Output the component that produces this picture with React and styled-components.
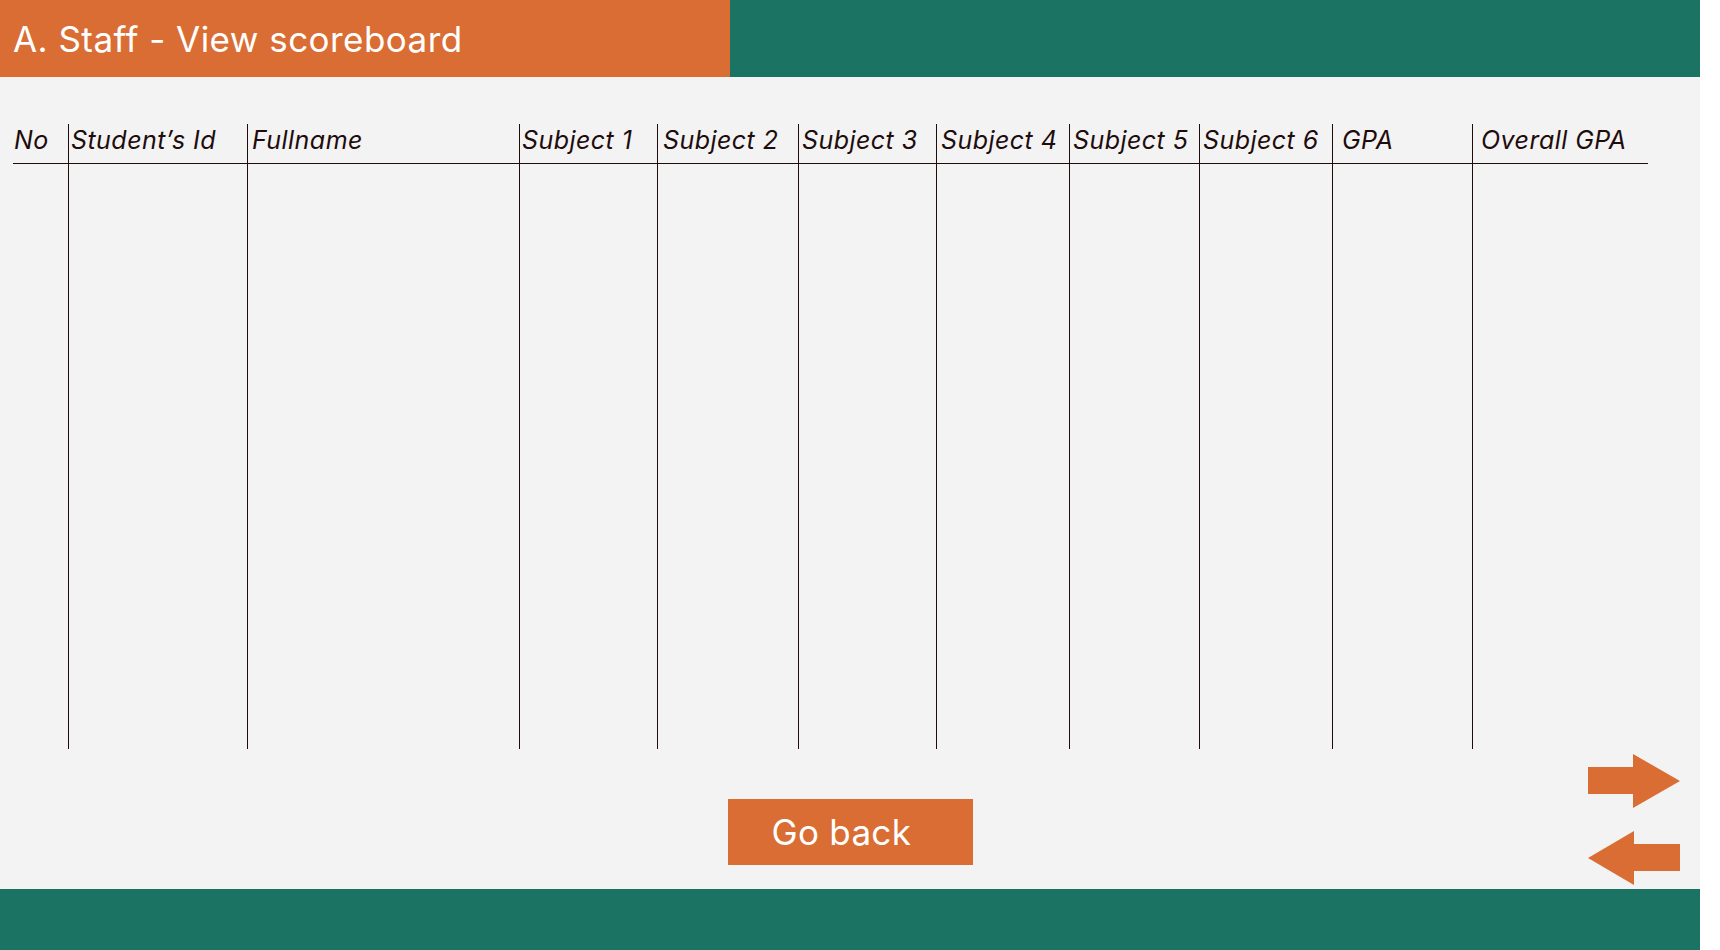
import React from "react";
import styled, { createGlobalStyle } from "styled-components";

const GlobalStyle = createGlobalStyle`
  html, body {
    margin: 0;
    padding: 0;
    background: #ffffff;
  }
  body {
    font-family: Inter, "Noto Sans", sans-serif;
  }
`;

const ORANGE = "#DA6D33";
const GREEN = "#1B7363";
const INK = "#200c0c";

const Page = styled.div`
  width: 1700px;
  height: 950px;
  background: #f3f3f3;
  display: flex;
  flex-direction: column;
`;

const TopBar = styled.header`
  height: 77px;
  display: flex;
  flex-shrink: 0;
`;

const TitleBlock = styled.div`
  width: 730px;
  background: ${ORANGE};
  display: flex;
  align-items: center;
  padding-left: 13px;
  box-sizing: border-box;
`;

const Title = styled.h1`
  margin: 0;
  font-family: Inter, sans-serif;
  font-weight: 400;
  font-size: 35px;
  color: #ffffff;
  line-height: 42px;
  letter-spacing: 0.45px;
`;

const TopFill = styled.div`
  flex: 1;
  background: ${GREEN};
`;

const Main = styled.main`
  flex: 1;
  display: flex;
  flex-direction: column;
  padding-top: 47px;
`;

const Table = styled.div`
  margin-left: 13px;
  height: 625px;
  display: grid;
  grid-template-columns: ${(p) => p.$cols};
`;

const Column = styled.div`
  display: flex;
  flex-direction: column;
  border-left: ${(p) => (p.$first ? "none" : `1px solid ${INK}`)};
`;

const HeadCell = styled.div`
  height: 40px;
  box-sizing: border-box;
  border-bottom: 1.5px solid ${INK};
  padding-left: ${(p) => p.$indent}px;
  padding-top: 1px;
  font-family: Inter, sans-serif;
  font-style: italic;
  font-size: 25px;
  line-height: 30px;
  letter-spacing: 0.45px;
  color: ${INK};
  white-space: nowrap;
`;

const BodyCell = styled.div`
  flex: 1;
`;

const Bottom = styled.div`
  flex: 1;
  display: grid;
  grid-template-columns: 1fr auto 1fr;
`;

const ButtonSlot = styled.div`
  grid-column: 2;
  padding-top: 50px;
`;

const GoBack = styled.button`
  width: 245px;
  height: 66px;
  border: none;
  background: ${ORANGE};
  color: #ffffff;
  font-family: Inter, sans-serif;
  font-size: 35px;
  line-height: 42px;
  letter-spacing: 0.3px;
  display: flex;
  align-items: center;
  padding: 0 0 0 44px;
  cursor: pointer;
`;

const Pager = styled.div`
  grid-column: 3;
  justify-self: end;
  display: flex;
  flex-direction: column;
  gap: 23px;
  padding-top: 5px;
  margin-right: 20px;
`;

const ArrowButton = styled.button`
  border: none;
  background: none;
  padding: 0;
  width: 92px;
  height: 54px;
  display: block;
  cursor: pointer;
  svg {
    display: block;
  }
`;

const Footer = styled.footer`
  height: 61px;
  background: ${GREEN};
  flex-shrink: 0;
`;

const columns = [
  { label: "No", width: 55, indent: 1 },
  { label: "Student’s Id", width: 179, indent: 2 },
  { label: "Fullname", width: 272, indent: 4 },
  { label: "Subject 1", width: 138, indent: 2 },
  { label: "Subject 2", width: 141, indent: 5 },
  { label: "Subject 3", width: 138, indent: 3 },
  { label: "Subject 4", width: 133, indent: 4 },
  { label: "Subject 5", width: 130, indent: 3 },
  { label: "Subject 6", width: 133, indent: 3 },
  { label: "GPA", width: 140, indent: 9 },
  { label: "Overall GPA", width: 176, indent: 8 },
];

const RightArrow = () => (
  <svg width="92" height="54" viewBox="0 0 92 54">
    <path d="M0 13 H45 V0 L92 27 L45 54 V40 H0 Z" fill={ORANGE} />
  </svg>
);

const LeftArrow = () => (
  <svg width="92" height="54" viewBox="0 0 92 54">
    <path d="M92 13 H46 V0 L0 27 L46 54 V40 H92 Z" fill={ORANGE} />
  </svg>
);

export default function App() {
  return (
    <>
      <GlobalStyle />
      <Page>
        <TopBar>
          <TitleBlock>
            <Title>A. Staff - View scoreboard</Title>
          </TitleBlock>
          <TopFill />
        </TopBar>
        <Main>
          <Table $cols={columns.map((c) => `${c.width}px`).join(" ")}>
            {columns.map((c, i) => (
              <Column key={c.label} $first={i === 0}>
                <HeadCell $indent={c.indent}>{c.label}</HeadCell>
                <BodyCell />
              </Column>
            ))}
          </Table>
          <Bottom>
            <ButtonSlot>
              <GoBack>Go back</GoBack>
            </ButtonSlot>
            <Pager>
              <ArrowButton aria-label="Next page">
                <RightArrow />
              </ArrowButton>
              <ArrowButton aria-label="Previous page">
                <LeftArrow />
              </ArrowButton>
            </Pager>
          </Bottom>
        </Main>
        <Footer />
      </Page>
    </>
  );
}
